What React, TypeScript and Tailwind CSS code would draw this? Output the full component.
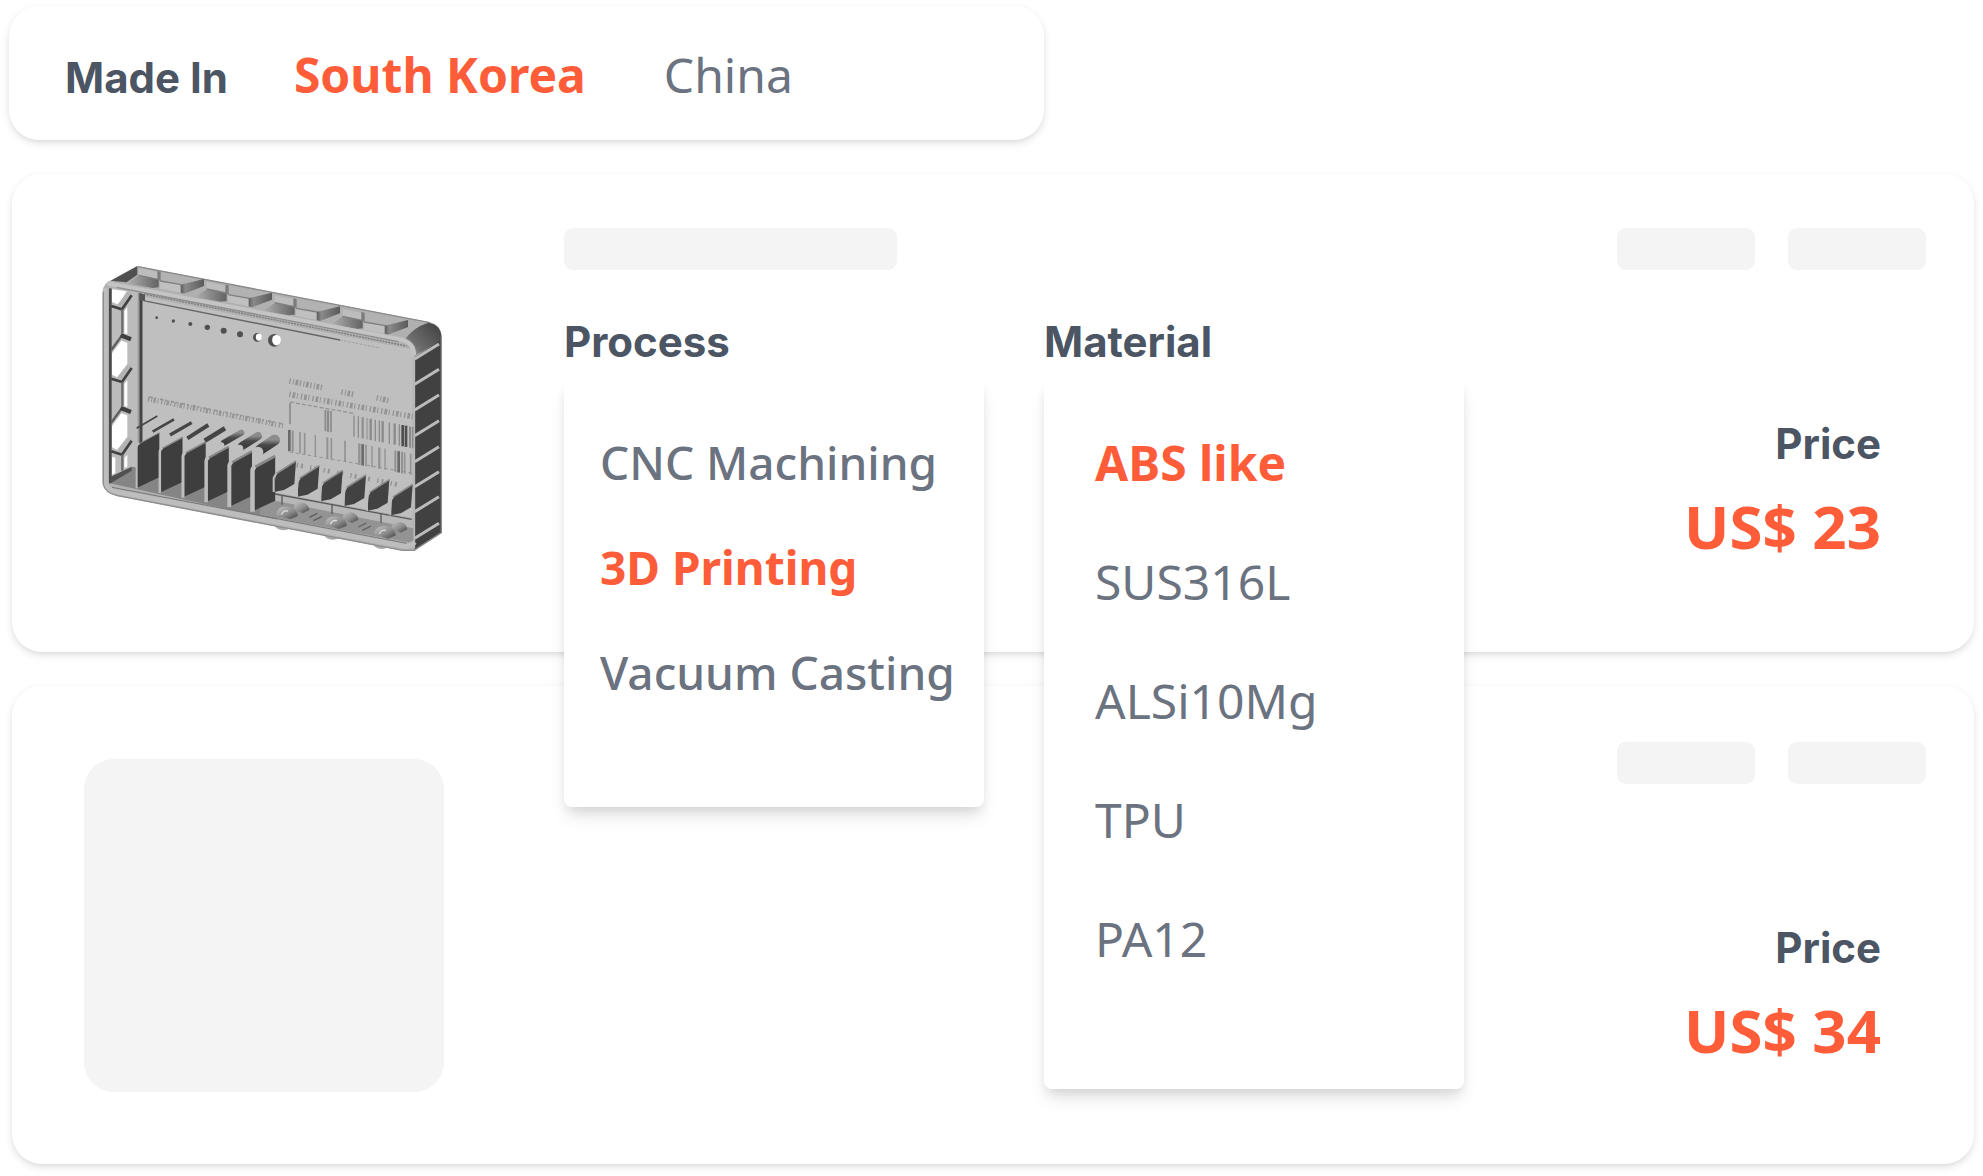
import { useState } from "react";
import clsx from "clsx";

const SLOPE = 0.195;

const barsTop = [
  [630, 5], [736, 5], [744, 7], [753, 5], [822, 4], [835, 4], [848, 6], [861, 3], [872, 7], [886, 4],
  [898, 4], [908, 7], [928, 4], [944, 7], [958, 4], [968, 8], [978, 8], [990, 6], [998, 5],
];
const barsBottom = [
  [628, 8], [638, 6], [660, 5], [674, 5], [706, 4], [742, 6], [754, 5], [795, 5], [838, 7], [848, 8],
  [858, 5], [876, 4], [898, 7], [915, 4], [946, 6], [956, 8], [966, 6], [974, 5], [992, 5],
];
const pinholes = [
  [230, 203, 4], [280, 213, 5], [331, 222, 6], [382, 232, 8], [431, 242, 9], [480, 253, 9], [532, 262, 13], [583, 271, 19],
];
const rods = [
  [170, 535, 232, 498, 5], [218, 545, 282, 508, 8], [270, 555, 335, 518, 10], [322, 565, 385, 525, 12],
  [374, 572, 435, 535, 14], [432, 578, 484, 548, 18], [486, 588, 534, 558, 24], [542, 598, 584, 570, 32],
];
const slits = [282, 358, 435, 512, 590, 665, 740, 820];

/** Shaded view of the uploaded enclosure part. */
function PartDrawing() {
  return (
    <svg viewBox="12 0 1080 930" className="w-full" role="img" aria-label="3D model of the part">
      <defs>
        <linearGradient id="corner" x1="0" y1="1" x2="1" y2="0.2">
          <stop offset="0" stopColor="#b5b5b5" />
          <stop offset="0.35" stopColor="#6e6e6e" />
          <stop offset="1" stopColor="#444444" />
        </linearGradient>
        <linearGradient id="wedge" x1="0" y1="0" x2="1" y2="0">
          <stop offset="0" stopColor="#5c5c5c" />
          <stop offset="0.2" stopColor="#8a8a8a" />
          <stop offset="1" stopColor="#5a5a5a" />
        </linearGradient>
        <linearGradient id="ramp" x1="0" y1="0" x2="1" y2="0">
          <stop offset="0" stopColor="#b0b0b0" />
          <stop offset="1" stopColor="#636363" />
        </linearGradient>
        <linearGradient id="rod" x1="0" y1="0" x2="0" y2="1">
          <stop offset="0" stopColor="#8c8c8c" />
          <stop offset="0.5" stopColor="#4a4a4a" />
          <stop offset="1" stopColor="#3c3c3c" />
        </linearGradient>
        <linearGradient id="bump" x1="0" y1="0" x2="1" y2="1">
          <stop offset="0" stopColor="#c4c4c4" />
          <stop offset="0.55" stopColor="#8c8c8c" />
          <stop offset="1" stopColor="#3f3f3f" />
        </linearGradient>
      </defs>

      {/* outer body */}
      {[610, 758, 905].map((x, i) => (
        <ellipse key={x} cx={x} cy={823 + i * 28} rx="26" ry="18" fill="#a9a9a9" />
      ))}
      <path d="M68 125Q70 98 95 90L170 48L1050 217Q1085 226 1085 262V848L1004 902H968L112 738Q72 728 68 700Z" fill="#b0b0b0" />
      <path d="M141 130L1004 300V870L141 700Z" fill="#bfbfbf" />

      {/* top cells */}
      <path d="M92 92L172 49V74L140 97Z" fill="#505050" />
      <path d="M174 50L1050 218L1000 262L140 97L174 76Z" fill="#b0b0b0" />
      <path d="M174 50L1050 218" stroke="#8a8a8a" strokeWidth="4" />
      {[0, 1, 2, 3, 4].map((i) => (
        <g key={i} transform={`translate(${i * 204} ${i * 41})`}>
          {i < 4 && <path d="M140 100L178 76L236 88V112L218 114Z" fill="url(#ramp)" />}
          {i < 4 && (
            <>
              <path d="M176 54L234 66V86L176 76Z" fill="#bdbdbd" />
              <path d="M176 76L234 88" stroke="#7f7f7f" strokeWidth="4" />
              <path d="M242 67L368 90L305 102L242 90Z" fill="#b2b2b2" />
              <path d="M240 94L304 104V128L240 116Z" fill="#c0c0c0" />
              <path d="M240 93L304 104" stroke="#808080" strokeWidth="4" />
              <path d="M302 104L372 87V108L312 131L302 128Z" fill="url(#wedge)" />
              <path d="M232 63L242 65V92L232 90Z" fill="#7c7c7c" />
            </>
          )}
        </g>
      ))}
      <path d="M975 268Q1000 232 1045 218Q1086 224 1085 270L1004 318Q1004 285 975 268Z" fill="url(#corner)" />
      <path d="M82 100L960 268Q1002 276 1002 315" fill="none" stroke="#c4c4c4" strokeWidth="13" />
      <path d="M110 112L955 275" stroke="#8f8f8f" strokeWidth="4" />
      <path d="M192 132L980 288" stroke="#7d7d7d" strokeWidth="4" strokeDasharray="6 3" />
      <path d="M190 152L780 270" stroke="#666666" strokeWidth="4" />
      <path d="M780 270L900 294" stroke="#a2a2a2" strokeWidth="3" strokeDasharray="8 4" />

      {/* right wall */}
      <path d="M1004 322L1085 268V848L1004 900Z" fill="#414141" />
      {slits.map((y) => (
        <path key={y} d={`M1004 ${y + 45}L1077 ${y}`} stroke="#bcbcbc" strokeWidth="9" />
      ))}
      <path d="M1001 322V895" stroke="#b8b8b8" strokeWidth="9" />
      <path d="M1084 260V845" stroke="#8c8c8c" strokeWidth="4" />

      {/* left wall with honeycomb openings */}
      <path d="M88 112L178 128V665L88 705Z" fill="#bcbcbc" />
      <path d="M91 115V700" stroke="#494949" strokeWidth="8" />
      {[0, 1, 2].map((i) => (
        <g key={i} transform={`translate(0 ${i * 218})`}>
          <path d={i === 0 ? "M96 118L140 124L116 164L96 156Z" : "M96 92L124 54L142 60V124L112 164L96 156Z"} fill="#ffffff" />
          {i < 2 && <path d="M133 184L142 172V252L133 250Z" fill="#ffffff" />}
          <path d="M112 164L144 124L156 130L130 178Z" fill="#b4b4b4" />
          <path d="M94 168L126 178L155 136" fill="none" stroke="#414141" strokeWidth="8" />
          <path d={i < 2 ? "M127 178V250" : "M127 178V226"} stroke="#6c6c6c" strokeWidth="7" />
          {i < 2 && <path d="M94 300L126 256" stroke="#5d5d5d" strokeWidth="7" />}
          {i < 2 && <path d="M122 256L153 268" stroke="#3f3f3f" strokeWidth="13" />}
        </g>
      ))}
      <path d="M96 620L106 623V668L96 674ZM133 624L142 614V650L133 654Z" fill="#ffffff" />
      <path d="M176 128V590" stroke="#9b9b9b" strokeWidth="6" />
      <path d="M183 132V590" stroke="#444444" strokeWidth="9" />
      <path d="M178 128L195 134V152H178Z" fill="#555555" />

      {/* drilled holes */}
      {pinholes.map(([x, y, r]) => (
        <g key={x}>
          <circle cx={x} cy={y} r={r} fill="#505050" />
          {r > 9 && <ellipse cx={x + r * 0.35} cy={y - r * 0.05} rx={r * 0.7} ry={r * 0.85} fill="#ffffff" />}
        </g>
      ))}

      {/* engraved scales */}
      <g fill="none" stroke="#949494">
        <path d="M204 447L612 528" strokeWidth="15" strokeDasharray="4 6 3 4 7 5 3 8" />
        <path d="M208 441L610 522" strokeWidth="5" strokeDasharray="10 6 5 12" />
        <path d="M628 393L728 413M784 426L824 434M890 443L932 453" strokeWidth="17" strokeDasharray="4 7 3 5 8 5" />
        <path d="M628 433L1000 500" strokeWidth="17" strokeDasharray="4 6 8 5 3 9" />
        <path d="M630 456L820 490" strokeWidth="4" strokeDasharray="12 6" />
        <path d="M630 606L1000 670" strokeWidth="3" strokeDasharray="10 8" />
        <path d="M650 645L960 705" strokeWidth="14" strokeDasharray="4 9 6 22" />
      </g>
      {barsTop.map(([x, w]) => (
        <path key={x} d={`M${x} ${459 + (x - 630) * SLOPE}v64`} stroke={w > 7 ? "#4f4f4f" : "#8b8b8b"} strokeWidth={w} />
      ))}
      {barsBottom.map(([x, w]) => (
        <path key={x} d={`M${x} ${540 + (x - 630) * SLOPE}v64`} stroke={w > 7 ? "#6a6a6a" : "#929292"} strokeWidth={w} />
      ))}

      {/* floor */}
      <path d="M90 700L158 650L590 740V810Z" fill="#858585" />
      <path d="M92 680L155 650V662L92 700Z" fill="#505050" />
      <path d="M540 745L585 728L1000 805V880L540 795Z" fill="#939393" />
      <path d="M585 728L1000 805V835L585 752Z" fill="#b7b7b7" />
      <path d="M585 732L995 808M606 738v26M756 766v26M903 793v26" fill="none" stroke="#5a5a5a" strokeWidth="4" />

      {/* graded rods */}
      {rods.map(([x1, y1, x2, y2, w]) => (
        <g key={x1}>
          <path d={`M${x1} ${y1}L${x2} ${y2}`} stroke={w > 14 ? "url(#rod)" : "#454545"} strokeWidth={w} strokeLinecap={w > 14 ? "round" : "butt"} />
          {w > 14 && <circle cx={x1 - 8} cy={y1 + 8} r={w / 2} fill="#bfbfbf" />}
        </g>
      ))}

      {/* tall fins */}
      {[0, 1, 2, 3, 4, 5].map((i) => (
        <g key={i} transform={`translate(${i * 69.5} ${i * 14})`}>
          <path d="M176 582L238 548V682L170 714V590Z" fill="#3e3e3e" />
          <path d="M176 582L238 548" stroke="#888888" strokeWidth={3 + i} />
          <path d="M170 715V592Q170 584 178 580" fill="none" stroke="#bdbdbd" strokeWidth={6 + i * 1.5} />
        </g>
      ))}

      {/* short fins */}
      {[0, 1, 2, 3, 4, 5].map((i) => (
        <g key={i} transform={`translate(${i * 70} ${i * 14})`}>
          <path d="M587 672L648 633L643 702L612 720L582 726Z" fill="#424242" />
          <path d="M587 672L648 633" stroke="#8b8b8b" strokeWidth="5" />
          <path d="M581 726V684L589 670" fill="none" stroke="#bdbdbd" strokeWidth="6" />
        </g>
      ))}

      {/* snap bumps */}
      {[0, 1, 2].map((i) => (
        <g key={i} transform={`translate(${i * 147} ${i * 29})`}>
          <path d="M640 776Q644 757 664 757Q686 760 688 780L668 790Z" fill="url(#bump)" />
          <path d="M588 795Q592 768 622 770Q650 774 654 798L630 808Z" fill="url(#bump)" />
          <path d="M604 794Q610 780 624 783" fill="none" stroke="#dddddd" strokeWidth="4" />
          {i < 2 && <path d="M688 802L712 790M700 812L726 799" stroke="#5f5f5f" strokeWidth="4" />}
        </g>
      ))}

      {/* front bottom rail */}
      <path d="M76 115V700Q78 718 104 724L970 888Q992 890 1004 876" fill="none" stroke="#bdbdbd" strokeWidth="15" />
      <path d="M70 125V702Q74 728 112 737L968 901H1002L1084 848" fill="none" stroke="#8d8d8d" strokeWidth="4" />
      <path d="M96 712L980 880" stroke="#777777" strokeWidth="3" />
    </svg>
  );
}

function Option({ label, selected, onSelect, className }: { label: string; selected: boolean; onSelect: () => void; className?: string }) {
  return (
    <button
      type="button"
      aria-pressed={selected}
      onClick={onSelect}
      className={clsx("block text-left whitespace-nowrap", selected ? "font-bold text-[#ff5c39]" : "text-[#6b7280]", className)}
    >
      {label}
    </button>
  );
}

function Picker({ title, options, initial, listClass, optionClass }: { title: string; options: string[]; initial: string; listClass: string; optionClass: string }) {
  const [value, setValue] = useState(initial);
  return (
    <section className="relative w-[420px]">
      <h2 className="font-[Inter] text-[42px] leading-[52px] font-bold text-[#4b5563]">{title}</h2>
      <div
        role="group"
        aria-label={title}
        className={clsx(
          "absolute inset-x-0 top-full z-10 mt-3 rounded-lg bg-white shadow-[0_12px_18px_-3px_rgba(0,0,0,0.1),0_6px_12px_-3px_rgba(0,0,0,0.1)]",
          listClass,
        )}
      >
        {options.map((o) => (
          <Option key={o} label={o} selected={o === value} onSelect={() => setValue(o)} className={optionClass} />
        ))}
      </div>
    </section>
  );
}

const cardClass = "bg-white shadow-[0_3px_9px_rgba(0,0,0,0.1),0_3px_6px_-3px_rgba(0,0,0,0.1)]";

function Summary({ price, gap }: { price: string; gap: string }) {
  return (
    <div className="ml-auto flex flex-col items-end">
      <div className="flex gap-[33px]">
        <div className="h-[42px] w-[138px] rounded-[9px] bg-[#f4f4f4]" />
        <div className="h-[42px] w-[138px] rounded-[9px] bg-[#f4f4f4]" />
      </div>
      <dl className={clsx("mr-[45px] text-right", gap)}>
        <dt className="font-[Inter] text-[42px] leading-[52px] font-bold text-[#4b5563]">Price</dt>
        <dd className="mt-4 text-6xl leading-[80px] font-bold text-[#ff5c39]">{price}</dd>
      </dl>
    </div>
  );
}

export default function App() {
  const [origin, setOrigin] = useState("South Korea");
  return (
    <main className="flex min-h-screen flex-col gap-[34px] bg-white pt-1.5 pr-[9px] pb-3 pl-3 font-['Noto_Sans',sans-serif]">
      <header className={clsx("-ml-[3px] flex h-[134px] w-[1035px] max-w-full items-baseline rounded-[30px] pt-[45px] pl-14", cardClass)}>
        <h1 className="font-[Inter] text-[42px] leading-[52px] font-bold text-[#4b5563]">Made In</h1>
        <div role="group" aria-label="Made in" className="ml-[66px] flex gap-[78px] text-5xl">
          {["South Korea", "China"].map((c) => (
            <Option key={c} label={c} selected={c === origin} onSelect={() => setOrigin(c)} />
          ))}
        </div>
      </header>

      <article className={clsx("flex h-[478px] rounded-[30px] pt-[54px] pr-12 pl-[72px]", cardClass)}>
        <div className="mt-[22px] w-[360px] shrink-0">
          <PartDrawing />
        </div>
        <div className="ml-[120px]">
          <div className="h-[42px] w-[333px] rounded-[9px] bg-[#f4f4f4]" />
          <div className="mt-[46px] flex gap-[60px]">
            <Picker
              title="Process"
              options={["CNC Machining", "3D Printing", "Vacuum Casting"]}
              initial="3D Printing"
              listClass="pt-[30px] pb-[82px] pl-9 font-medium"
              optionClass="text-[46px] leading-[105px]"
            />
            <Picker
              title="Material"
              options={["ABS like", "SUS316L", "ALSi10Mg", "TPU", "PA12"]}
              initial="ABS like"
              listClass="pt-[23px] pb-[91px] pl-[51px]"
              optionClass="text-5xl leading-[119px]"
            />
          </div>
        </div>
        <Summary price="US$ 23" gap="mt-[148px]" />
      </article>

      <article className={clsx("flex h-[478px] rounded-[30px] pt-14 pr-12 pl-[72px]", cardClass)}>
        <div className="mt-[17px] h-[333px] w-[360px] rounded-[30px] bg-[#f4f4f4]" />
        <Summary price="US$ 34" gap="mt-[138px]" />
      </article>
    </main>
  );
}
